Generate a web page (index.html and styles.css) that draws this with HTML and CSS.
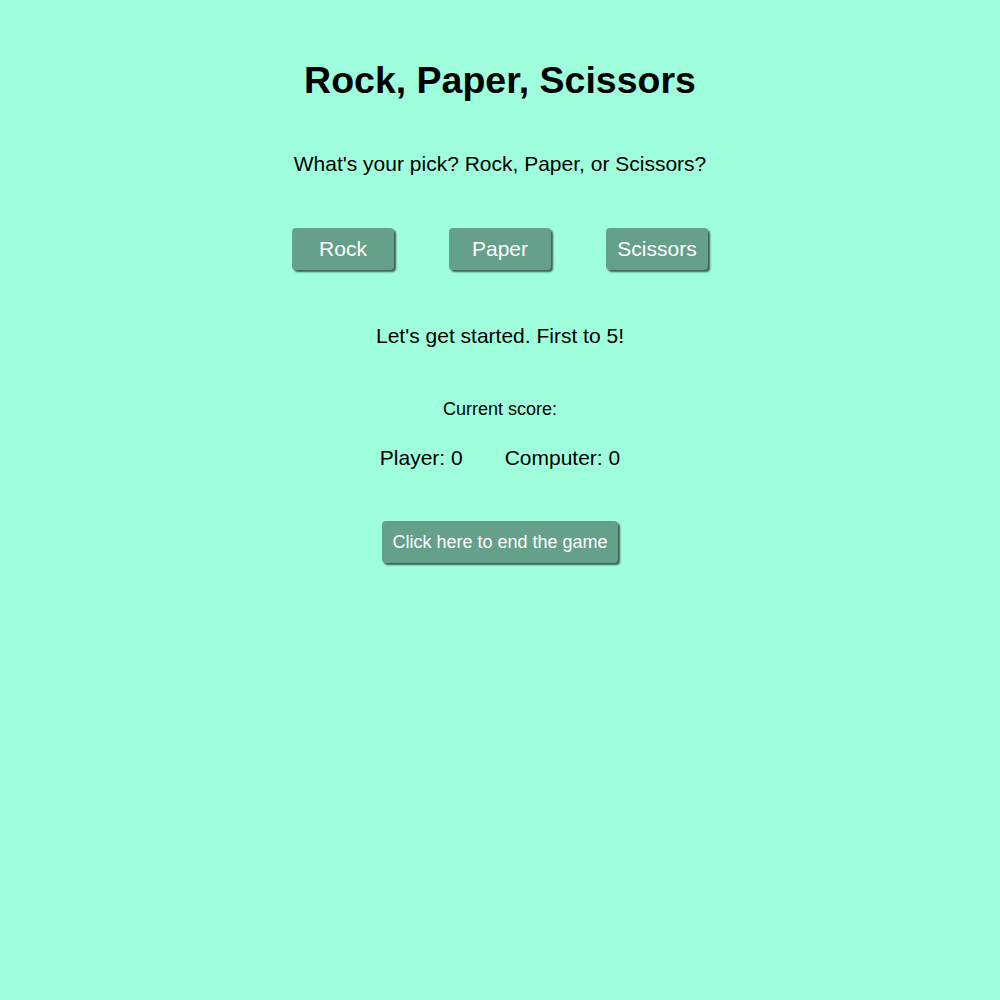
FILE: index.html
```html
<!DOCTYPE html>
<html lang="en">
<head>
<meta charset="utf-8">
<title>Rock, Paper, Scissors</title>
<link rel="stylesheet" href="styles.css">
</head>
<body>
<main class="game">
  <h1 class="title">Rock, Paper, Scissors</h1>
  <p class="prompt">What's your pick? Rock, Paper, or Scissors?</p>
  <div class="choices">
    <button class="btn choice">Rock</button>
    <button class="btn choice">Paper</button>
    <button class="btn choice">Scissors</button>
  </div>
  <p class="message">Let's get started. First to 5!</p>
  <p class="score-label">Current score:</p>
  <div class="scores">
    <span class="score">Player: 0</span>
    <span class="score">Computer: 0</span>
  </div>
  <button class="btn end">Click here to end the game</button>
</main>
</body>
</html>
```
FILE: styles.css
```css
html, body {
  margin: 0;
  padding: 0;
}
body {
  background: #9fffdd;
  font-family: "Liberation Sans", Arial, Helvetica, sans-serif;
  color: #000;
  min-height: 1000px;
}
.game {
  display: flex;
  flex-direction: column;
  align-items: center;
  padding-top: 58px;
  text-align: center;
}
.title {
  margin: 0;
  font-size: 37.5px;
  line-height: 44px;
  font-weight: bold;
}
.prompt {
  margin: 50px 0 0;
  font-size: 21px;
  line-height: 24px;
}
.choices {
  margin-top: 52px;
  display: flex;
  gap: 55px;
}
.btn {
  font-family: "Liberation Sans", Arial, Helvetica, sans-serif;
  background: #64a08a;
  color: #fff;
  border: none;
  border-radius: 4px;
  box-shadow: 2px 2px 2px #3a5e50;
  cursor: pointer;
}
.choice {
  width: 102px;
  height: 42px;
  padding: 9px 0;
  font-size: 21px;
  line-height: 24px;
}
.message {
  margin: 54px 0 0;
  font-size: 21px;
  line-height: 24px;
}
.score-label {
  margin: 51px 0 0;
  font-size: 18px;
  line-height: 21px;
}
.scores {
  margin-top: 26px;
  display: flex;
  gap: 42px;
  font-size: 21px;
  line-height: 24px;
}
.end {
  margin-top: 51px;
  height: 42px;
  padding: 10px 10px;
  font-size: 18px;
  line-height: 22px;
}
```
